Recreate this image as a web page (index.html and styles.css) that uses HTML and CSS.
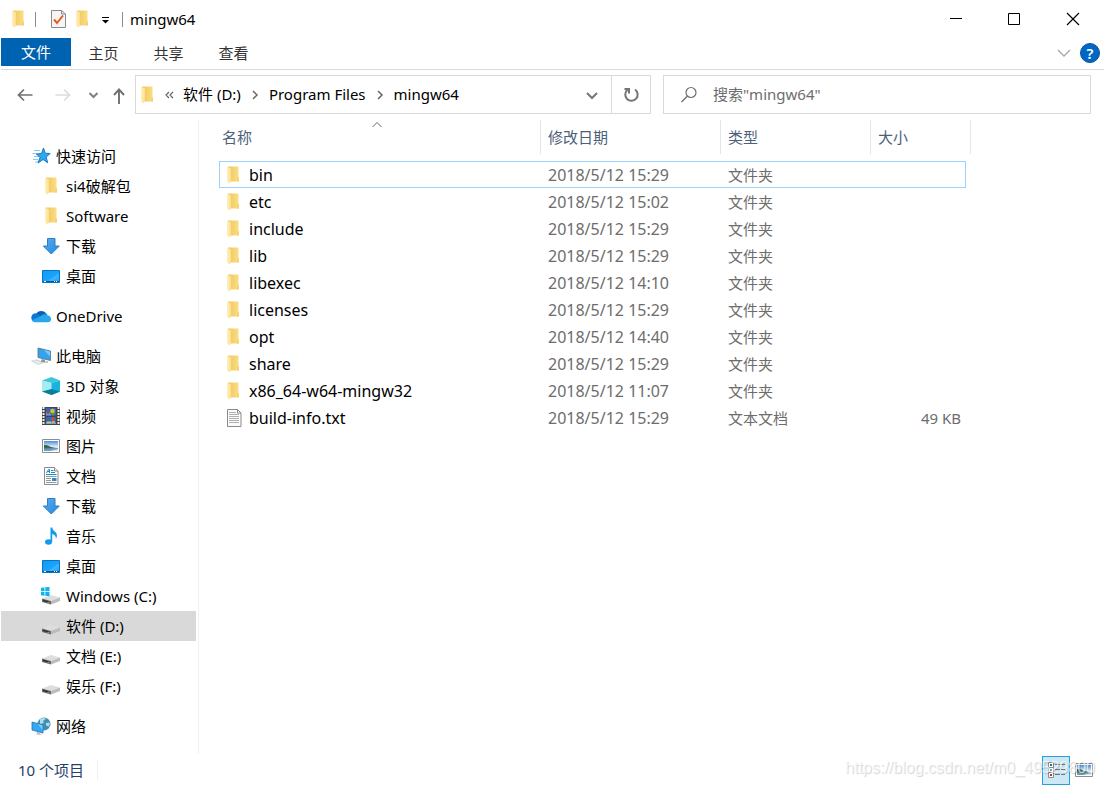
FILE: index.html
```html
<!DOCTYPE html>
<html lang="zh-CN">
<head>
<meta charset="utf-8">
<title>mingw64</title>
<link rel="stylesheet" href="styles.css">
</head>
<body>
<svg class="sprite" aria-hidden="true">
  <defs>
    <linearGradient id="fold" x1="0" x2="1"><stop offset="0" stop-color="#efc55d"/><stop offset="1" stop-color="#fbdf86"/></linearGradient>
    <linearGradient id="flap" x1="0" x2="1"><stop offset="0" stop-color="#fff0bd"/><stop offset="1" stop-color="#fbdf8b"/></linearGradient>
    <linearGradient id="sky" x1="0" y1="0" x2="0" y2="1"><stop offset="0" stop-color="#4a8fe0"/><stop offset=".6" stop-color="#e4f2fb"/></linearGradient>
    <linearGradient id="screen" x1="0" y1="0" x2="1" y2="1"><stop offset="0" stop-color="#0d9afa"/><stop offset=".6" stop-color="#1ba4ff"/><stop offset=".61" stop-color="#45b6ff"/><stop offset="1" stop-color="#129efc"/></linearGradient>
    <linearGradient id="arrow" x1="0" y1="0" x2="1" y2="1"><stop offset="0" stop-color="#5baef2"/><stop offset="1" stop-color="#2487dc"/></linearGradient>
  </defs>
  <symbol id="i-folder" viewBox="0 0 20 20"><path d="M5 1.500h10.500V12l.5.500v4H5z" fill="url(#fold)"/><path d="M14 12.500h2v4h-2z" fill="#f6d370"/><path d="M4 1.500l4 2v13L6.500 18.500l-2.500-2z" fill="url(#flap)"/></symbol>
  <symbol id="i-star" viewBox="0 0 20 20"><path d="M3 4.500h6M1.500 7.500h5M3 10.500h4M2 13.500h5M4 16h3" stroke="#8bc8ee"/><path d="M12.500 2l1.700 5.200 5 .3-4 3.500 1.500 5.800-4.600-3.300L7 17l2-5.400L5.500 8l5-.5z" fill="#2ea6f0" stroke="#0b72bd" stroke-width=".9"/></symbol>
  <symbol id="i-down" viewBox="0 0 20 20"><path d="M6.500 2.500h7.500v7.500h4.300L10.300 18 2.300 10h4.200z" fill="url(#arrow)" stroke="#2f7fc6"/></symbol>
  <symbol id="i-desktop" viewBox="0 0 20 20"><path d="M1.500 4.500h17v12h-17z" fill="url(#screen)" stroke="#0875bd"/><path d="M2 15.500h16" stroke="#0a5790"/><path d="M3 15.500h2M13 15.500h1M15 15.500h1" stroke="#fff"/></symbol>
  <symbol id="i-cloud" viewBox="0 0 20 20"><path d="M5 8a6 6 0 0 1 10.500 0l-5 4z" fill="#0a5fb4"/><path d="M3.500 16A4.200 4.200 0 1 1 6 7.500L14 13z" fill="#0d78d0"/><path d="M10 9.500a5 5 0 0 1 6.500-1.200l-2 4z" fill="#168bdf"/><path d="M3.500 16.200q-2-.3-2.800-1.900L11 9.500q2-.8 4.500-.5 4.500.5 4.500 4 0 3.200-3.500 3.200z" fill="#28a8ea"/></symbol>
  <symbol id="i-pc" viewBox="0 0 20 20"><path d="M7 2l12.500 3v9.500L7 11.500z" fill="#35a3ec" stroke="#57717f" stroke-width=".8"/><path d="M13 4l6 1.500v5z" fill="#7bcaf8"/><path d="M11 13l3 .8v1.800h3v1H9z" fill="#8d989f"/><path d="M.5 15l6-1.200 5.500 3-4.500 1.700z" fill="#dbe0e4" stroke="#c3c9cd" stroke-width=".6"/><path d="M3 15l6 2.200" stroke="#fff" stroke-width=".7"/></symbol>
  <symbol id="i-cube" viewBox="0 0 20 20"><path d="M1 4.500L10.500 1 19 4.500 10.500 7z" fill="#3fc6d6"/><path d="M1 4.500L10.500 7v12L1 15.500z" fill="#6fdbe6"/><path d="M1 4.500L10.500 7v6.500L1 15.500z" fill="#a5ecf1"/><path d="M19 4.500L10.500 7v12l8.500-3.500z" fill="#18b4de"/><path d="M1 15.500l9.500-2.500L19 15.500 10.500 19z" fill="#087e98"/></symbol>
  <symbol id="i-video" viewBox="0 0 20 20"><path d="M1 1h18v18H1z" fill="#444"/><path d="M2.500 1v18M17.500 1v18" stroke="#eee" stroke-width="2" stroke-dasharray="2 1"/><path d="M5 2h10v7.500H5zM5 11h10v7H5z" fill="#3166bd"/><path d="M5 7q2-2 4 0l1 2.500H5zM5 16q3-2 10 1v1H5z" fill="#6aa3da"/><circle cx="11.500" cy="5" r="2.300" fill="#e3bd24"/><circle cx="7" cy="7" r="1.300" fill="#d73e32"/><path d="M10 7h4l-1 2.500h-2z" fill="#43a047"/><circle cx="12" cy="13" r="1.800" fill="#d84934"/><path d="M6 16.500h4M11 16h3" stroke="#e3c32c" stroke-width="1.500"/></symbol>
  <symbol id="i-picture" viewBox="0 0 20 20"><path d="M1.500 3.500h17v13h-17z" fill="#fff" stroke="#8e8e8e"/><path d="M3 5h14v10H3z" fill="url(#sky)"/><path d="M3 9q3-.5 5 1t9 2V13H3z" fill="#3c6650"/><path d="M3 12.500l14-.5v3H3z" fill="#6d9dbb"/><path d="M9 15l8-2v2z" fill="#d9e6ec"/></symbol>
  <symbol id="i-doc" viewBox="0 0 20 20"><path d="M3.500 1.500h10L17 5v13.500H3.500z" fill="#fff" stroke="#8b8b8b"/><path d="M13.500 1.500V5H17" fill="#eee" stroke="#8b8b8b"/><path d="M5.500 7L7.500 3.500h1V7M6.500 5.500h2M10 4.500h2.500M10 6.500h4" fill="none" stroke="#1687c8"/><path d="M5 8.500h10.500" stroke="#1687c8"/><path d="M5 10.500h10.500M5 12.500h5M5 14.500h5M5 16.500h10.500" stroke="#8f9aa0"/><path d="M11 12h4.500v3H11z" fill="#3d83b9"/></symbol>
  <symbol id="i-music" viewBox="0 0 20 20"><ellipse cx="7.500" cy="16" rx="3.500" ry="2.700" fill="#129bec"/><path d="M9.500 1.500h1.700q.3 2.500 2.800 4.200 3.500 3 .8 7.300 .6-4-3.600-5V16H9.500z" fill="#129bec"/></symbol>
  <symbol id="i-drive" viewBox="0 0 20 20"><path d="M1 12.500L10 9l9 2.500-9 3.500z" fill="#dedede"/><path d="M1 12.500l9 2.500v3.500l-9-2.500z" fill="#6a6a6a"/><path d="M10 15l9-3.500v3.500l-9 3.500z" fill="#bcbcbc"/><path d="M2 13.700l6.500 1.800v1.300L2 15z" fill="#292929"/><path d="M6.500 15.800h1.800v1H6.500z" fill="#4fe04f"/></symbol>
  <symbol id="i-windrive" viewBox="0 0 20 20"><use href="#i-drive" x="0" y="0" width="20" height="20"/><path d="M0 1.800l3.500-.4v3.900H0zM4.300 1.300L8.500 1v4.300H4.300zM0 6h3.500v3.700L0 9.300zM4.300 6h4.200v4.200l-4.200-.4z" fill="#0cb3ec"/></symbol>
  <symbol id="i-network" viewBox="0 0 20 20"><circle cx="13" cy="8" r="6.500" fill="#3d8fb8"/><path d="M9 3q4-2 6 0l-3 2 1 2-4 1zM15 7l4-.5-1 4-3-1z" fill="#b6d9e3"/><path d="M1 6l11 3v8L1 14z" fill="#36a7f0" stroke="#1e75ae" stroke-width=".8"/><path d="M7 8l4.500 1.300v5z" fill="#7cccfa"/><path d="M6 16l3 .8v1.500H6z" fill="#9daab1"/><path d="M4 18l4-.8 4 1.300-4 .8z" fill="#ccd3d7"/></symbol>
  <symbol id="i-text" viewBox="0 0 20 20"><path d="M4.500 1.500h10L18 5v13.500H4.500z" fill="#fafafa" stroke="#8a8a8a"/><path d="M14.500 1.500V5H18" fill="none" stroke="#8a8a8a"/><path d="M6 4.500h7M6 6.500h10M6 8.500h10M6 10.500h10M6 12.500h10M6 14.500h10" stroke="#b0b0b0"/></symbol>
  <symbol id="i-check" viewBox="0 0 20 20"><path d="M3.500 1.500h10L17.500 5v13.500h-14z" fill="#f5f5f5" stroke="#8a8a8a"/><path d="M13.500 1.500V5h4" fill="none" stroke="#8a8a8a"/><path d="M6 10.500l3 3.500 6-7.500" fill="none" stroke="#e8591c" stroke-width="2"/></symbol>
  <symbol id="i-chev" viewBox="0 0 20 20"><path d="M5 8l5 5 5-5" fill="none" stroke="currentColor" stroke-width="2"/></symbol>
</svg>

<div class="window">
  <header class="titlebar">
    <svg class="ico"><use href="#i-folder"/></svg>
    <span class="bar"></span>
    <button class="quick first" aria-label="属性"><svg class="ico"><use href="#i-check"/></svg></button>
    <button class="quick" aria-label="新建文件夹"><svg class="ico"><use href="#i-folder"/></svg></button>
    <button class="quick narrow" aria-label="自定义快速访问工具栏"><svg class="ico" viewBox="0 0 20 20"><path d="M7 8.500h7" stroke="#000"/><path d="M7 11h7l-3.500 3.500z"/></svg></button>
    <span class="bar"></span>
    <h1 class="title">mingw64</h1>
    <div class="caption">
      <button class="cap" aria-label="最小化"><svg class="cap-ico" viewBox="0 0 14 14"><path d="M1 6.500h12" stroke="#000"/></svg></button>
      <button class="cap" aria-label="最大化"><svg class="cap-ico" viewBox="0 0 14 14"><path d="M1.500 1.500h11v11h-11z" fill="none" stroke="#000"/></svg></button>
      <button class="cap close" aria-label="关闭"><svg class="cap-ico" viewBox="0 0 14 14"><path d="M1 1l12 12M13 1L1 13" stroke="#000" stroke-width="1.200"/></svg></button>
    </div>
  </header>

  <nav class="ribbon">
    <button class="tab file">文件</button>
    <button class="tab">主页</button>
    <button class="tab">共享</button>
    <button class="tab">查看</button>
    <button class="expand" aria-label="展开功能区"><svg class="ico" viewBox="0 0 20 20"><path d="M4 7l6 6 6-6" fill="none" stroke="#a8a8a8" stroke-width="1.300"/></svg></button>
    <button class="help" aria-label="帮助">?</button>
  </nav>

  <div class="navbar">
    <div class="arrows">
      <button class="nav-btn" aria-label="后退"><svg class="ico" viewBox="0 0 20 20"><path d="M17.500 10h-14M9 4.500L3.500 10 9 15.500" fill="none" stroke="#707070" stroke-width="1.700"/></svg></button>
      <button class="nav-btn forward" aria-label="前进"><svg class="ico" viewBox="0 0 20 20"><path d="M2.500 10h14M11 4.500l5.500 5.500-5.500 5.500" fill="none" stroke="#dcdcdc" stroke-width="1.700"/></svg></button>
      <button class="nav-btn recent" aria-label="最近位置"><svg class="ico" viewBox="0 0 20 20"><path d="M6.500 8l4 4 4-4" fill="none" stroke="#808080" stroke-width="2"/></svg></button>
      <button class="nav-btn up" aria-label="上移"><svg class="ico" viewBox="0 0 20 20"><path d="M10 19V5M5 10l5-5.500 5 5.500" fill="none" stroke="#707070" stroke-width="1.900"/></svg></button>
    </div>
    <div class="address">
      <svg class="ico"><use href="#i-folder"/></svg>
      <button class="crumb-more" aria-label="更多"><svg class="mini" viewBox="0 0 12 12"><path d="M5 3L2 6l3 3M9 3L6 6l3 3" fill="none" stroke="#666" stroke-width="1.200"/></svg></button>
      <button class="crumb">软件 (D:)</button>
      <svg class="mini sep" viewBox="0 0 12 12"><path d="M4 2l4 4-4 4" fill="none" stroke="#666" stroke-width="1.500"/></svg>
      <button class="crumb">Program Files</button>
      <svg class="mini sep" viewBox="0 0 12 12"><path d="M4 2l4 4-4 4" fill="none" stroke="#666" stroke-width="1.500"/></svg>
      <button class="crumb">mingw64</button>
      <button class="drop" aria-label="以前的位置"><svg class="ico"><use href="#i-chev"/></svg></button>
      <button class="refresh" aria-label="刷新"><svg class="ico" viewBox="0 0 20 20"><path d="M14 4.500A6.200 6.200 0 1 1 6.500 4.800" fill="none" stroke="#757575" stroke-width="2"/><path d="M3.500 4h4.500v4.500" fill="none" stroke="#757575" stroke-width="2"/></svg></button>
    </div>
    <label class="search">
      <svg class="ico" viewBox="0 0 20 20"><circle cx="12" cy="7.500" r="5" fill="none" stroke="#707070" stroke-width="1.200"/><path d="M8.500 11L2.500 17" stroke="#707070" stroke-width="1.400"/></svg>
      <input class="search-box" type="text" placeholder='搜索"mingw64"' aria-label="搜索">
    </label>
  </div>

  <div class="main">
    <aside class="sidebar">
      <ul class="tree">
        <li><a class="node root" href="#"><svg class="ico"><use href="#i-star"/></svg>快速访问</a></li>
        <li><a class="node" href="#"><svg class="ico"><use href="#i-folder"/></svg>si4破解包</a></li>
        <li><a class="node" href="#"><svg class="ico"><use href="#i-folder"/></svg>Software</a></li>
        <li><a class="node" href="#"><svg class="ico"><use href="#i-down"/></svg>下载</a></li>
        <li><a class="node" href="#"><svg class="ico"><use href="#i-desktop"/></svg>桌面</a></li>
      </ul>
      <ul class="tree">
        <li><a class="node root" href="#"><svg class="ico"><use href="#i-cloud"/></svg>OneDrive</a></li>
      </ul>
      <ul class="tree">
        <li><a class="node root" href="#"><svg class="ico"><use href="#i-pc"/></svg>此电脑</a></li>
        <li><a class="node" href="#"><svg class="ico"><use href="#i-cube"/></svg>3D 对象</a></li>
        <li><a class="node" href="#"><svg class="ico"><use href="#i-video"/></svg>视频</a></li>
        <li><a class="node" href="#"><svg class="ico"><use href="#i-picture"/></svg>图片</a></li>
        <li><a class="node" href="#"><svg class="ico"><use href="#i-doc"/></svg>文档</a></li>
        <li><a class="node" href="#"><svg class="ico"><use href="#i-down"/></svg>下载</a></li>
        <li><a class="node" href="#"><svg class="ico"><use href="#i-music"/></svg>音乐</a></li>
        <li><a class="node" href="#"><svg class="ico"><use href="#i-desktop"/></svg>桌面</a></li>
        <li><a class="node" href="#"><svg class="ico"><use href="#i-windrive"/></svg>Windows (C:)</a></li>
        <li><a class="node selected" href="#"><svg class="ico"><use href="#i-drive"/></svg>软件 (D:)</a></li>
        <li><a class="node" href="#"><svg class="ico"><use href="#i-drive"/></svg>文档 (E:)</a></li>
        <li><a class="node" href="#"><svg class="ico"><use href="#i-drive"/></svg>娱乐 (F:)</a></li>
      </ul>
      <ul class="tree">
        <li><a class="node root" href="#"><svg class="ico"><use href="#i-network"/></svg>网络</a></li>
      </ul>
    </aside>

    <main class="content">
      <table class="files">
        <colgroup><col class="c-name"><col class="c-date"><col class="c-type"><col class="c-size"><col class="c-end"></colgroup>
        <thead>
          <tr>
            <th class="h-name">名称<svg class="sort" viewBox="0 0 12 8"><path d="M1.500 6L6 1.500 10.500 6" fill="none" stroke="#666"/></svg></th>
            <th>修改日期</th><th>类型</th><th colspan="2">大小</th>
          </tr>
        </thead>
        <tbody>
          <tr class="focus"><td class="name"><svg class="ico"><use href="#i-folder"/></svg>bin</td><td class="date">2018/5/12 15:29</td><td>文件夹</td><td class="size"></td></tr>
          <tr><td class="name"><svg class="ico"><use href="#i-folder"/></svg>etc</td><td class="date">2018/5/12 15:02</td><td>文件夹</td><td class="size"></td></tr>
          <tr><td class="name"><svg class="ico"><use href="#i-folder"/></svg>include</td><td class="date">2018/5/12 15:29</td><td>文件夹</td><td class="size"></td></tr>
          <tr><td class="name"><svg class="ico"><use href="#i-folder"/></svg>lib</td><td class="date">2018/5/12 15:29</td><td>文件夹</td><td class="size"></td></tr>
          <tr><td class="name"><svg class="ico"><use href="#i-folder"/></svg>libexec</td><td class="date">2018/5/12 14:10</td><td>文件夹</td><td class="size"></td></tr>
          <tr><td class="name"><svg class="ico"><use href="#i-folder"/></svg>licenses</td><td class="date">2018/5/12 15:29</td><td>文件夹</td><td class="size"></td></tr>
          <tr><td class="name"><svg class="ico"><use href="#i-folder"/></svg>opt</td><td class="date">2018/5/12 14:40</td><td>文件夹</td><td class="size"></td></tr>
          <tr><td class="name"><svg class="ico"><use href="#i-folder"/></svg>share</td><td class="date">2018/5/12 15:29</td><td>文件夹</td><td class="size"></td></tr>
          <tr><td class="name"><svg class="ico"><use href="#i-folder"/></svg>x86_64-w64-mingw32</td><td class="date">2018/5/12 11:07</td><td>文件夹</td><td class="size"></td></tr>
          <tr><td class="name"><svg class="ico"><use href="#i-text"/></svg>build-info.txt</td><td class="date">2018/5/12 15:29</td><td>文本文档</td><td class="size">49 KB</td></tr>
        </tbody>
      </table>
    </main>
  </div>

  <footer class="status">
    <span class="count">10 个项目</span>
    <div class="views">
      <button class="view active" aria-label="详细信息"><svg class="ico" viewBox="0 0 20 20"><path d="M2.500 2.500h5v15h-5zM2.500 7.500h5M2.500 12.500h5" fill="#fff" stroke="#8c8c8c"/><path d="M4 5h2" stroke="#2b6f8c" stroke-width="2"/><path d="M4 10h2" stroke="#8ac" stroke-width="2"/><path d="M4 15h2" stroke="#b33a20" stroke-width="2"/><path d="M9 4.500h5M15 4.500h4M9 9.500h5M15 9.500h4M9 14.500h5M15 14.500h4" stroke="#777"/></svg></button>
      <button class="view" aria-label="大图标"><svg class="ico"><use href="#i-picture"/></svg></button>
    </div>
    <span class="watermark">https://blog.csdn.net/m0_49529800</span>
  </footer>
</div>
</body>
</html>
```
FILE: styles.css
```css
* { box-sizing: border-box; }
body {
  margin: 0;
  background: #fff;
  color: #000;
  font: 15px/20px "Noto Sans", "Noto Sans CJK SC", sans-serif;
}
button, input { font: inherit; color: inherit; background: none; border: 0; padding: 0; margin: 0; }
button { display: flex; align-items: center; justify-content: center; flex: none; }
.sprite { position: absolute; width: 0; height: 0; }
.ico { width: 20px; height: 20px; flex: none; display: block; }
.mini { width: 12px; height: 12px; flex: none; display: block; }

.window { min-height: 100vh; display: flex; flex-direction: column; padding-left: 1px; }

.titlebar { height: 38px; display: flex; align-items: center; padding-left: 7px; }
.bar { width: 1px; height: 15px; background: #8c8c8c; margin: 0 7px; }
.quick { width: 24px; height: 24px; }
.quick.first { margin-left: 3px; }
.quick.narrow { width: 21px; }
.title { font-size: 15px; font-weight: 400; margin: 0; }
.caption { margin-left: auto; display: flex; height: 100%; padding-right: 1px; }
.cap { width: 58px; }
.cap.close { width: 60px; }
.cap-ico { width: 14px; height: 14px; }

.ribbon { display: flex; height: 32px; border-bottom: 1px solid #dadbdc; color: #333; }
.tab { width: 65px; height: 30px; }
.tab.file { width: 70px; height: 28px; background: #0063b1; color: #fff; }
.expand { margin-left: auto; width: 30px; height: 30px; }
.help {
  width: 20px; height: 20px; margin: 5px 4px 0 1px;
  border: 1px solid #0a55a0; border-radius: 50%;
  background: #0067c5; color: #fff; font-size: 15px; font-weight: 600;
}

.navbar { display: flex; padding: 5px 13px 0 0; }
.arrows { display: flex; flex: none; padding-left: 14px; }
.nav-btn { width: 38px; height: 39px; justify-content: flex-start; }
.nav-btn.forward { width: 30px; }
.nav-btn.recent { width: 26px; }
.nav-btn.up { width: 26px; }
.address { flex: 1 1 516px; min-width: 0; height: 39px; display: flex; align-items: center; border: 1px solid #d9d9d9; padding-left: 1px; }
.crumb-more { width: 26px; }
.crumb { white-space: nowrap; padding-bottom: 2px; }
.sep { margin: 0 8px; }
.drop { width: 38px; height: 37px; margin-left: auto; color: #777; }
.refresh { width: 39px; height: 37px; border-left: 1px solid #d9d9d9; }
.search { flex: 1 1 428px; min-width: 0; height: 39px; margin-left: 12px; display: flex; align-items: center; gap: 14px; padding-left: 15px; border: 1px solid #d9d9d9; }
.search-box { flex: 1; min-width: 0; outline: 0; padding-bottom: 2px; }
.search-box::placeholder { color: #6d6d6d; opacity: 1; }

.main { flex: 1; display: flex; padding-top: 6px; }
.sidebar { width: 198px; flex: none; border-right: 1px solid #f0f0f0; padding: 21px 2px 0 0; }
.tree { list-style: none; margin: 0 0 10px; padding: 0; }
.node { display: flex; align-items: center; gap: 5px; height: 30px; padding-left: 40px; color: #000; text-decoration: none; white-space: nowrap; }
.node.root { padding-left: 30px; }
.node.selected { background: #d9d9d9; }

.content { flex: 1; min-width: 0; padding-left: 20px; }
.files { border-collapse: separate; border-spacing: 0; table-layout: fixed; width: 752px; }
.c-name { width: 322px; }
.c-date { width: 180px; }
.c-type { width: 150px; }
.c-size { width: 95px; }
.c-end { width: 5px; }
.files th { height: 34px; padding: 0 7px; text-align: left; font-weight: 400; color: #4c607a; border-right: 1px solid #e5e5e5; }
.files th.h-name { padding-left: 3px; position: relative; }
.sort { position: absolute; top: 1px; left: 152px; width: 12px; height: 8px; }
.files thead::after { content: ""; display: block; height: 7px; }
.files td { height: 27px; padding: 0 7px; color: #6d6d6d; white-space: nowrap; }
.files td.name { display: flex; align-items: center; gap: 6px; padding: 0 0 0 4px; color: #000; font-size: 16px; }
.files td.date { font-size: 16px; }
.files td.size { text-align: right; padding-right: 5px; }
.files .focus td { border: 0 solid #99d1ff; border-width: 1px 0; }
.files .focus td.name { border-left-width: 1px; padding-left: 3px; }
.files .focus td.size { border-right-width: 1px; }

.status { position: relative; height: 32px; display: flex; align-items: center; padding: 0 6px 0 17px; color: #26406a; }
.count { padding-right: 13px; border-right: 1px solid #f0f0f0; }
.views { margin-left: auto; display: flex; }
.view { width: 28px; height: 29px; }
.view.active { background: #cce8f6; border: 1px solid #26a0da; }
.watermark {
  position: absolute; right: 9px; top: 4px;
  font: 16px/20px "Liberation Sans", sans-serif;
  color: rgba(255, 255, 255, .7); text-shadow: 1px 1px 1px rgba(0, 0, 0, .18);
  white-space: nowrap; pointer-events: none;
}
```
